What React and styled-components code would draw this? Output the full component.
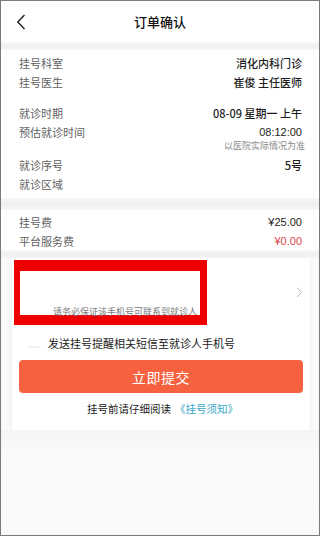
import React from 'react';
import styled, { createGlobalStyle } from 'styled-components';

const GlobalStyle = createGlobalStyle`
  html, body {
    margin: 0;
    padding: 0;
    background: #fff;
  }
  body {
    font-family: "Noto Sans CJK SC", "Liberation Sans", sans-serif;
    -webkit-font-smoothing: antialiased;
  }
`;

const Screen = styled.div`
  box-sizing: border-box;
  width: 320px;
  height: 536px;
  border: 1px solid #7a7a7a;
  background: #fbfafb;
  overflow: hidden;
  display: flex;
  flex-direction: column;
`;

const Header = styled.header`
  position: relative;
  height: 41px;
  flex-shrink: 0;
  display: flex;
  align-items: center;
  justify-content: center;
  background: #fff;
  font-size: 13px;
  font-weight: 500;
  color: #111;
`;

const Back = styled.span`
  position: absolute;
  left: 15px;
  top: 13px;
  display: flex;
`;

const Band = styled.div`
  height: ${({ h }) => h}px;
  flex-shrink: 0;
  background: linear-gradient(#f7f7f7, #efefef 50%, #f7f7f7);
`;

const Section = styled.section`
  background: #fff;
  padding: ${({ pad }) => pad};
  display: flex;
  flex-direction: column;
`;

const Row = styled.div`
  display: flex;
  justify-content: space-between;
  align-items: center;
  height: 19px;
  padding: 0 17px 0 18px;
  margin-top: ${({ gap }) => gap || 0}px;
  font-size: 11px;
`;

const Label = styled.span`
  color: #5f5f5f;
`;

const Value = styled.span`
  color: ${({ red }) => (red ? '#d9454a' : '#1d1d1d')};
  font-weight: ${({ red }) => (red ? 400 : 500)};
  font-family: ${({ num }) =>
    num ? '"Liberation Sans", "Noto Sans CJK SC", sans-serif' : 'inherit'};
`;

const Note = styled.div`
  text-align: right;
  padding-right: 14px;
  height: 10px;
  line-height: 10px;
  font-size: 9px;
  color: #8a8a8a;
`;

const Card = styled.div`
  margin: 0 9px 0 11px;
  background: #fff;
  box-shadow: 0 2px 6px rgba(0, 0, 0, 0.06);
  padding: 2px 7px 14px 2px;
  display: flex;
  flex-direction: column;
`;

const PatientRow = styled.div`
  display: flex;
  align-items: center;
  justify-content: space-between;
`;

const Redacted = styled.div`
  box-sizing: border-box;
  width: 193px;
  height: 65px;
  border-style: solid;
  border-color: #ee0000;
  border-width: 11px 7px 10px 6px;
  background: #fff;
  display: flex;
  align-items: flex-end;
  overflow: visible;
`;

const RedactedText = styled.span`
  font-size: 9px;
  line-height: 10px;
  color: #7a7a7a;
  white-space: nowrap;
  margin: 0 0 -2px 33px;
`;

const Chevron = styled.span`
  display: flex;
`;

const SmsRow = styled.div`
  display: flex;
  align-items: center;
  gap: 8px;
  height: 20px;
  margin: 8px 0 0 15px;
  font-size: 11px;
  color: #1a1a1a;
`;

const Check = styled.span`
  width: 11px;
  height: 2px;
  background: #f0f0f0;
  margin-top: 8px;
`;

const Submit = styled.button`
  margin: 7px 0 0 5px;
  height: 33px;
  border: none;
  border-radius: 4px;
  background: #f6623f;
  color: #fff;
  font-family: inherit;
  font-size: 14px;
  letter-spacing: 0.5px;
`;

const Notice = styled.div`
  margin-top: 8px;
  text-align: center;
  font-size: 10.5px;
  color: #1a1a1a;
  padding-left: 8px;

  a {
    color: #3ba7c9;
    text-decoration: none;
    margin-left: 4px;
  }
`;

const Rest = styled.div`
  flex: 1;
  background: linear-gradient(#f4f4f4, #fcfbfc 30px, #fbfafb);
`;

const App = () => (
  <>
    <GlobalStyle />
    <Screen>
      <Header>
        <Back>
          <svg width="10" height="16" viewBox="0 0 10 16">
            <path d="M8.5 1 L1.8 8 L8.5 15" fill="none" stroke="#222" strokeWidth="1.4" />
          </svg>
        </Back>
        订单确认
      </Header>
      <Band h={8} />
      <Section pad="3px 0 5px">
        <Row><Label>挂号科室</Label><Value>消化内科门诊</Value></Row>
        <Row><Label>挂号医生</Label><Value>崔俊 主任医师</Value></Row>
        <Row gap={12}><Label>就诊时期</Label><Value>08-09 星期一 上午</Value></Row>
        <Row><Label>预估就诊时间</Label><Value num>08:12:00</Value></Row>
        <Note>以医院实际情况为准</Note>
        <Row gap={4}><Label>就诊序号</Label><Value>5号</Value></Row>
        <Row><Label>就诊区域</Label><Value /></Row>
      </Section>
      <Band h={12} />
      <Section pad="2px 0 0">
        <Row><Label>挂号费</Label><Value num>¥25.00</Value></Row>
        <Row><Label>平台服务费</Label><Value num red>¥0.00</Value></Row>
      </Section>
      <Band h={8} />
      <Card>
        <PatientRow>
          <Redacted>
            <RedactedText>请务必保证该手机号可联系到就诊人</RedactedText>
          </Redacted>
          <Chevron>
            <svg width="7" height="11" viewBox="0 0 7 11">
              <path d="M1 1 L5.8 5.5 L1 10" fill="none" stroke="#b5b5b5" strokeWidth="1" />
            </svg>
          </Chevron>
        </PatientRow>
        <SmsRow>
          <Check />
          发送挂号提醒相关短信至就诊人手机号
        </SmsRow>
        <Submit>立即提交</Submit>
        <Notice>
          挂号前请仔细阅读<a href="#notice">《挂号须知》</a>
        </Notice>
      </Card>
      <Rest />
    </Screen>
  </>
);

export default App;
